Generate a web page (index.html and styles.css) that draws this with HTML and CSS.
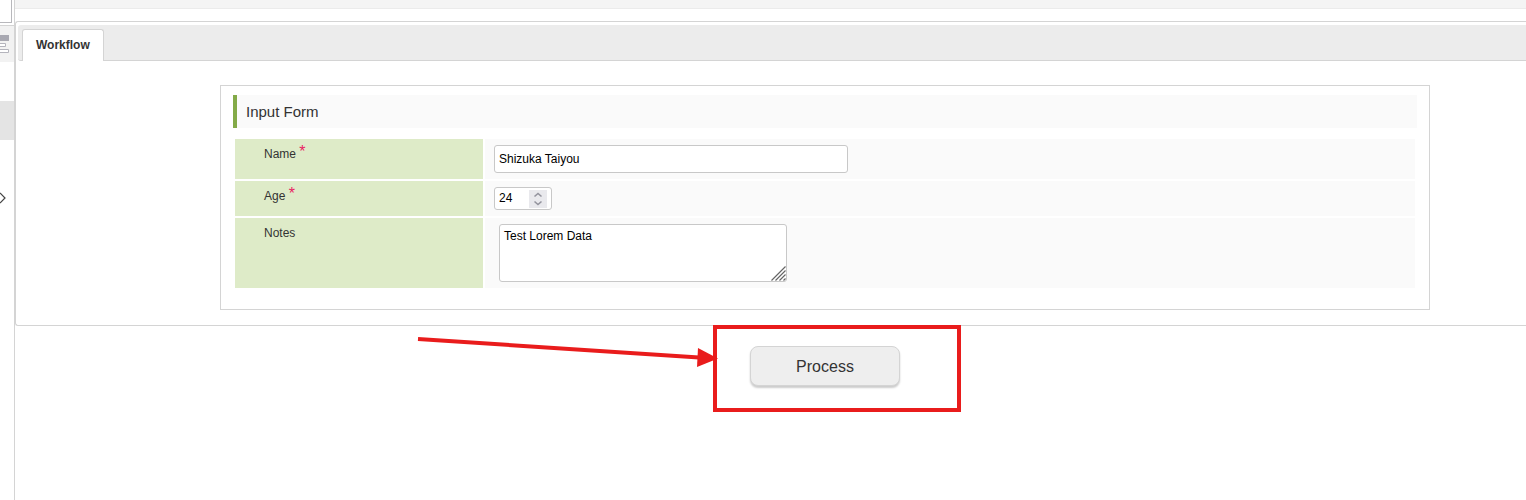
FILE: index.html
```html
<!DOCTYPE html>
<html lang="en">
<head>
<meta charset="utf-8">
<title>Workflow</title>
<link rel="stylesheet" href="styles.css">
</head>
<body>
<div class="app">
  <aside class="sidebar">
    <div class="side-search"></div>
    <div class="side-tools">
      <svg width="10" height="20" viewBox="0 0 10 20" aria-hidden="true">
        <rect x="0" y="1" width="9" height="6" fill="#a9a9b2"/>
        <path d="M0 9.500H5.500V12.500H0M0 15.500H8.500V18.500H0" fill="#fff" stroke="#b4b4bc"/>
      </svg>
    </div>
    <div class="side-selected"></div>
    <button class="side-toggle" type="button" aria-label="Expand">
      <svg width="8" height="12" viewBox="0 0 8 12" aria-hidden="true"><path d="M0 1L5 6L0 11" fill="none" stroke="#444" stroke-width="1.200"/></svg>
    </button>
  </aside>
  <main class="main">
    <div class="topbar"></div>
    <section class="panel">
      <nav class="tabs"><a class="tab" href="#workflow">Workflow</a></nav>
      <div class="panel-body" id="workflow">
        <form class="card" id="input-form">
          <h1 class="card-title">Input Form</h1>
          <table class="fields">
            <tr>
              <th scope="row"><label for="name">Name <span class="required">*</span></label></th>
              <td><input class="control name" id="name" type="text" value="Shizuka Taiyou"></td>
            </tr>
            <tr>
              <th scope="row"><label for="age">Age <span class="required">*</span></label></th>
              <td>
                <div class="control number">
                  <input class="number-input" id="age" type="number" value="24">
                  <svg class="spinner" width="18" height="18" viewBox="0 0 18 18" aria-hidden="true"><path d="M5.500 6.500L9 3.500L12.500 6.500M5.500 11.500L9 14.500L12.500 11.500" fill="none" stroke="#94949e" stroke-width="1.600"/></svg>
                </div>
              </td>
            </tr>
            <tr>
              <th scope="row"><label for="notes">Notes</label></th>
              <td>
                <div class="notes-wrap">
                  <textarea class="control notes" id="notes">Test Lorem Data</textarea>
                  <svg class="grip" width="15" height="15" viewBox="0 0 15 15" aria-hidden="true"><path d="M0.500 14.500L14.500 0.500M4.500 14.500L14.500 4.500M8.500 14.500L14.500 8.500M12.500 14.500L14.500 12.500" fill="none" stroke="#666" stroke-width="1.200"/></svg>
                </div>
              </td>
            </tr>
          </table>
        </form>
      </div>
    </section>
    <div class="actions">
      <div class="callout">
        <button class="process" type="submit" form="input-form">Process</button>
        <svg class="annotation" width="544" height="87" viewBox="0 0 544 87" aria-hidden="true">
          <rect x="298" y="2" width="244" height="83" fill="none" stroke="#e91c1c" stroke-width="4"/>
          <path d="M1 14L282 32.500" stroke="#e91c1c" stroke-width="4"/>
          <path d="M281 23L301 33.500L280 42Z" fill="#e91c1c"/>
        </svg>
      </div>
    </div>
  </main>
</div>
</body>
</html>
```
FILE: styles.css
```css
* { box-sizing: border-box; }

body {
  margin: 0;
  background: #fff;
  color: #333;
  font: 12px/16px "Liberation Sans", Arial, sans-serif;
}

.app { display: flex; min-height: 100vh; }

.sidebar {
  flex: none;
  width: 15px;
  border-right: 1px solid #d4d4d4;
}
.side-search {
  width: 12px;
  height: 23px;
  margin-bottom: 2px;
  border: solid #b8b8bc;
  border-width: 0 1px 1px 0;
}
.side-tools {
  height: 37px;
  padding-top: 8px;
  border-top: 1px solid #d4d4d4;
  background: #f2f2f2;
}
.side-tools svg, .side-toggle svg { display: block; }
.side-selected { height: 39px; margin-top: 39px; background: #e4e4e4; }
.side-toggle {
  display: block;
  margin-top: 52px;
  padding: 0;
  border: 0;
  background: none;
}

.main { flex: 1; min-width: 0; }
.topbar {
  height: 9px;
  border-bottom: 1px solid #ebebeb;
  background: #f4f4f4;
}
.panel {
  margin-top: 12px;
  border: 1px solid #d4d4d4;
  border-right: 0;
  border-radius: 3px 0 0 3px;
}
.tabs {
  display: flex;
  margin: 3px 0 0 2px;
  padding: 4px 4px 0;
  border-bottom: 1px solid #d4d4d4;
  border-radius: 3px 0 0 3px;
  background: #ececec;
}
.tab {
  margin-bottom: -1px;
  padding: 7px 13px 8px;
  border: 1px solid #d4d4d4;
  border-bottom: 0;
  border-radius: 3px 3px 0 0;
  background: #fff;
  color: #333;
  font-weight: bold;
  text-decoration: none;
}
.panel-body { padding: 24px 96px 15px 204px; }

.card {
  padding: 9px 12px 19px;
  border: 1px solid #d4d4d4;
}
.card-title {
  margin: 0 0 9px;
  padding: 7px 9px 6px;
  border-left: 4px solid #83aa48;
  background: #fafafa;
  font-size: 15px;
  font-weight: normal;
  line-height: 20px;
}

.fields { width: 100%; border-spacing: 2px; }
.fields th, .fields td { vertical-align: top; }
.fields th {
  width: 248px;
  padding: 7px 29px;
  background: #deebc8;
  font-weight: normal;
  text-align: left;
}
.fields td { padding: 6px 9px; background: #fafafa; }
.required {
  color: #e91e63;
  font-size: 16px;
  line-height: 8px;
  vertical-align: 1px;
}

.control {
  display: block;
  border: 1px solid #c8c8c8;
  border-radius: 3px;
  background: #fff;
  color: #000;
  font: 12px/16px "Liberation Sans", Arial, sans-serif;
}
.name { width: 354px; height: 28px; padding: 0 4px; }
.number {
  display: flex;
  align-items: center;
  justify-content: space-between;
  width: 58px;
  height: 23px;
  padding: 0 4px;
}
.number-input {
  width: 28px;
  height: 18px;
  padding: 0 0 2px;
  border: 0;
  background: none;
  font: inherit;
  appearance: textfield;
}
.number-input::-webkit-inner-spin-button { appearance: none; }
.spinner { background: #e9e9ed; }
.notes-wrap { position: relative; width: 288px; margin-left: 5px; }
.notes {
  width: 100%;
  height: 58px;
  padding: 3px 4px;
  resize: none;
}
.grip { position: absolute; right: 1px; bottom: 1px; }

.actions {
  display: flex;
  justify-content: center;
  padding: 20px 96px 0 205px;
}
.callout { position: relative; }
.process {
  display: block;
  width: 150px;
  height: 40px;
  padding: 2px 0 0;
  border: 1px solid #d4d4d4;
  border-radius: 8px;
  background: #eee;
  box-shadow: 0 2px 2px #ccc;
  color: #333;
  font: 16px/20px "Liberation Sans", Arial, sans-serif;
}
.annotation { position: absolute; top: -21px; left: -333px; pointer-events: none; }
```
